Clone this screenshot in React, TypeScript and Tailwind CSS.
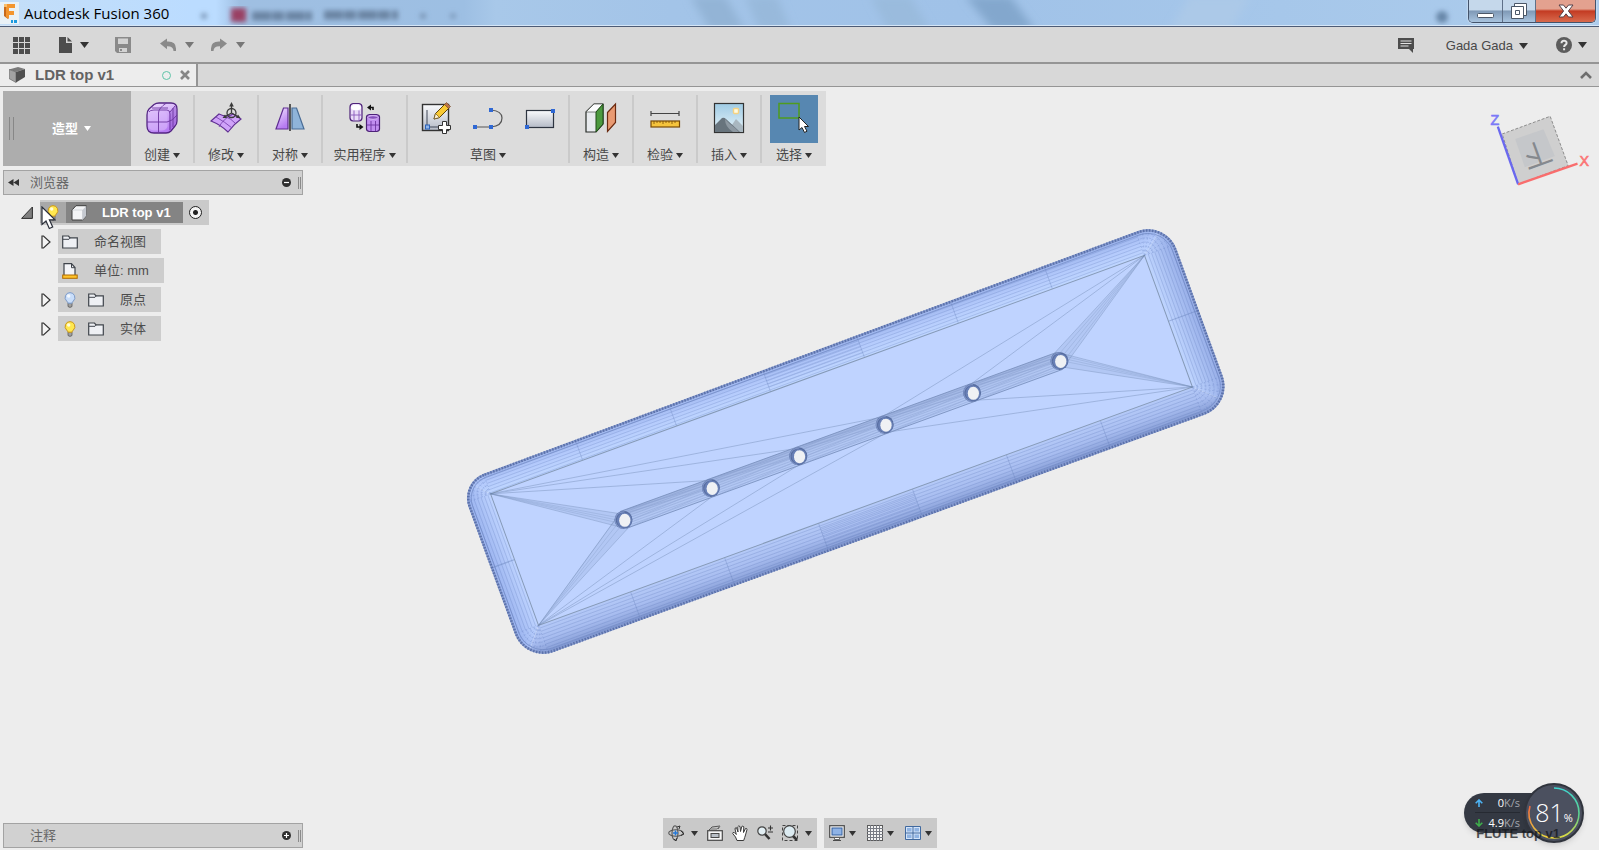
import type { ReactNode } from 'react';
import clsx from 'clsx';

const UI_FONT = "font-['Liberation_Sans','Noto_Sans_CJK_SC',sans-serif]";
const TITLE_FONT = "font-['Open_Sans','Noto_Sans_CJK_SC',sans-serif]";

function Caret({ big, className }: { big?: boolean; className?: string }) {
  return (
    <svg viewBox="0 0 9 6" preserveAspectRatio="none" className={clsx(big ? 'w-[9px] h-[6px]' : 'w-[7px] h-[5px]', 'shrink-0 fill-current', className)}>
      <path d="M0 0h9L4.500 6z" />
    </svg>
  );
}

function Icon({ size = 16, children, className }: { size?: 16 | 32; children: ReactNode; className?: string }) {
  return (
    <svg viewBox={`0 0 ${size} ${size}`} className={clsx(size === 32 ? 'size-8' : 'size-4', 'shrink-0', className)} fill="none">
      {children}
    </svg>
  );
}

/* ---------- title bar ---------- */

function TitleBar() {
  return (
    <header className="relative flex h-[27px] shrink-0 items-start justify-between overflow-hidden border-b border-[#4d5b75] bg-[#a5c5e8]">
      <svg className="absolute inset-0 h-full w-full" viewBox="0 0 1599 26" preserveAspectRatio="none">
        <defs>
          <linearGradient id="sky" x1="0" x2="1">
            <stop offset="0" stopColor="#c4def8" />
            <stop offset=".12" stopColor="#bbdcff" />
            <stop offset=".135" stopColor="#bbdcff" />
            <stop offset=".15" stopColor="#9fbfe2" />
            <stop offset=".29" stopColor="#9dbfe3" />
            <stop offset=".31" stopColor="#a8c8e9" />
            <stop offset=".42" stopColor="#a3c4e8" />
            <stop offset=".6" stopColor="#a0c2e8" />
            <stop offset="1" stopColor="#acccec" />
          </linearGradient>
          <filter id="soft"><feGaussianBlur stdDeviation="4" /></filter>
          <filter id="ghost"><feGaussianBlur stdDeviation="2.500" /></filter>
        </defs>
        <rect width="1599" height="26" fill="url(#sky)" />
        <g filter="url(#soft)">
          <path d="M690-4h35l20 34h-35z" fill="#93b4d6" />
          <path d="M745-4h32l14 34h-32z" fill="#98b9db" />
          <path d="M870-4h40l20 34h-42z" fill="#9abbdd" />
          <path d="M965-4h45l25 34h-42z" fill="#83a7cd" />
          <path d="M1190-4h60l-20 34h-60z" fill="#acc9e8" />
        </g>
        <g filter="url(#ghost)">
          <rect x="231" y="8" width="15" height="14" fill="#9a3f63" />
          <path d="M252 16h60M324 15h74" stroke="#6a84a3" strokeWidth="9" strokeDasharray="19 1 12 2" />
          <circle cx="204" cy="16" r="3" fill="#7893b3" />
          <circle cx="423" cy="16" r="3" fill="#7893b3" />
          <circle cx="453" cy="16" r="3" fill="#7f9bbd" />
          <circle cx="1442" cy="17" r="6" fill="#6887a8" />
        </g>
        <path d="M0 25.500h1599" stroke="#d5e6f7" />
      </svg>
      <div className="relative flex h-[26px] items-center gap-[5px]">
        <svg viewBox="0 0 19 22" className="h-[22px] w-[19px]">
          <rect width="19" height="22" fill="#e9f1f6" />
          <path d="M4 2h4v15l-4-3z" fill="#c76a1c" />
          <path d="M6 2h9v4H9v3h5v4H9v4l-3-2z" fill="#f3952e" />
          <path d="M4 2h3v3H4z" fill="#f9bd6a" />
          <path d="M11 18h2v3h-2zM14 18h3v3h-3z" fill="#1d9be0" />
        </svg>
        <h1 className={clsx(TITLE_FONT, 'text-[15px] leading-5 text-black')}>Autodesk Fusion 360</h1>
      </div>
      <div className="relative mr-[3px] flex h-[23px] overflow-hidden rounded-b-[5px] border border-t-0 border-[#43536b] shadow-[0_0_2px_#ffffff]">
        <button aria-label="最小化" className="flex w-[34px] items-end justify-center border-r border-[#5f7088] bg-gradient-to-b from-[#c5d8eb] from-45% via-[#7f99b6] via-50% to-[#a9c4df] pb-1">
          <svg viewBox="0 0 17 5" className="h-[5px] w-[17px]"><rect x=".5" y=".5" width="16" height="4" rx="1" fill="#fff" stroke="#4b5767" /></svg>
        </button>
        <button aria-label="还原" className="flex w-[33px] items-center justify-center border-r border-[#5f7088] bg-gradient-to-b from-[#c5d8eb] from-45% via-[#7f99b6] via-50% to-[#a9c4df]">
          <svg viewBox="0 0 18 18" className="size-[18px]" fill="#fff" stroke="#4b5767">
            <path d="M4.500 1.500h12v12h-12z" />
            <path fillRule="evenodd" d="M1.500 4.500h12v12h-12zM5.500 8.500v4h4v-4z" />
          </svg>
        </button>
        <button aria-label="关闭" className="flex w-[59px] items-center justify-center bg-gradient-to-b from-[#e3a18f] from-40% via-[#c33a22] via-50% to-[#d8694c]">
          <svg viewBox="0 0 16 14" className="h-[14px] w-4">
            <path d="M1 1h4.500L8 4.200 10.500 1H15l-4.600 6 4.600 6h-4.500L8 9.800 5.500 13H1l4.600-6z" fill="#fff" stroke="#544148" />
          </svg>
        </button>
      </div>
    </header>
  );
}

/* ---------- application bar ---------- */

function AppBar() {
  return (
    <div className="flex h-[37px] shrink-0 items-center justify-between border-b-2 border-[#959595] bg-[#d8d8d8] pt-px pr-3 pl-[13px]">
      <div className="flex items-center text-[#4a4a4a]">
        <button aria-label="数据面板">
          <svg viewBox="0 0 17 17" className="size-[17px]" fill="#4d4d4d">
            {[0, 6, 12].map(y => [0, 6, 12].map(x => <rect key={`${x}-${y}`} x={x} y={y} width="5" height="5" />))}
          </svg>
        </button>
        <button aria-label="文件" className="ml-7 flex items-center gap-1.5">
          <Icon>
            <path d="M1 0h7v6h6v10H1z" fill="#4d4d4d" />
            <path d="M9.500 0 14 4.500H9.500z" fill="#4d4d4d" />
          </Icon>
          <Caret big className="text-[#333]" />
        </button>
        <button aria-label="保存" className="ml-[26px]">
          <Icon>
            <path d="M0 0h16v16H2l-2-2z" fill="#8a8a8a" />
            <path d="M3 1.500h10V7H3zM4 11h8v4H4z" fill="#d3d3d3" />
            <path d="M5 12h2v2H5z" fill="#8a8a8a" />
          </Icon>
        </button>
        <button aria-label="撤销" className="ml-[29px] flex items-center gap-[9px]">
          <Icon><path d="M0 6.500 7 1.500v3q9-.5 9 7v2.500h-2.500q0-5-6.500-4.800v3z" fill="#8a8a8a" /></Icon>
          <Caret big className="text-[#777]" />
        </button>
        <button aria-label="恢复" className="ml-[17px] flex items-center gap-[9px]">
          <Icon><path d="M16 6.500 9 1.500v3q-9-.5-9 7v2.500h2.500q0-5 6.500-4.800v3z" fill="#8a8a8a" /></Icon>
          <Caret big className="text-[#777]" />
        </button>
      </div>
      <div className="flex items-center text-[#3a3a3a]">
        <button aria-label="通知">
          <Icon>
            <path d="M0 1h16v11h-1v4l-4-4H0z" fill="#4d4d4d" />
            <path d="M2.500 4h11M2.500 6.500h11M2.500 9h8" stroke="#e2e2e2" />
          </Icon>
        </button>
        <button className="ml-8 flex items-center gap-1.5 pt-0.5 text-[13px] leading-4 text-[#484848]">
          Gada Gada
          <Caret big className="text-[#333]" />
        </button>
        <button aria-label="帮助" className="ml-7 flex items-center gap-1.5">
          <Icon>
            <circle cx="8" cy="8" r="8" fill="#5c5c5c" />
            <path d="M5.500 6.200C5.500 3 10.600 3 10.600 6c0 2-2.500 1.800-2.500 4M8.100 11.200v2" stroke="#e6e6e6" strokeWidth="2" />
          </Icon>
          <Caret big className="text-[#333]" />
        </button>
      </div>
    </div>
  );
}

function TabBar() {
  return (
    <div className="flex h-[23px] shrink-0 items-stretch justify-between border-b border-[#959595] bg-[#d8d8d8] pr-[7px]">
      <div className="flex items-center border-r-2 border-[#959595] bg-[#ededed] pr-1.5 pl-[9px]">
        <Icon>
          <path d="M0 2.500 9 0l7 2-9 3z" fill="#7a7a7a" />
          <path d="M0 2.500l7 2.500v10.500l-7-4z" fill="#a2a2a2" stroke="#696969" strokeWidth=".7" />
          <path d="M7 5l9-3v8l-9 5.500z" fill="#505050" />
        </Icon>
        <span className="ml-2.5 w-[127px] text-[15px] leading-5 font-bold text-[#636363]">LDR top v1</span>
        <span className="size-[9px] rounded-full border border-[#5fc4a8]" />
        <button aria-label="关闭文档" className="ml-[9px]">
          <svg viewBox="0 0 10 10" className="size-2.5"><path d="M1 1l8 8M9 1 1 9" stroke="#868686" strokeWidth="2.600" /></svg>
        </button>
      </div>
      <button aria-label="折叠">
        <svg viewBox="0 0 12 8" className="h-2 w-3" fill="none"><path d="M1 7l5-5 5 5" stroke="#6f6f6f" strokeWidth="2.600" /></svg>
      </button>
    </div>
  );
}

/* ---------- ribbon ---------- */

function CreateIcon() {
  return (
    <Icon size={32}>
      <defs>
        <linearGradient id="violet" x1="0" y1="0" x2=".4" y2="1">
          <stop offset="0" stopColor="#f1e3ff" />
          <stop offset="1" stopColor="#b67bf2" />
        </linearGradient>
      </defs>
      <path d="M8 2.500Q10 1 13 1h12q6 0 6 6v12q0 3-2 5l-4 5q-2 2-5 2H8q-7 0-7-7V13q0-4 2-6z" fill="url(#violet)" stroke="#532583" strokeWidth="1.300" />
      <path d="M23 10l7-6v17l-7 8z" fill="#8a4bc9" opacity=".4" />
      <rect x="2.500" y="9.500" width="19" height="19" rx="5" fill="#d9b8fb" opacity=".6" />
      <path d="M12.500 30V11q0-5 8-10M1 20h20q6-1 10-7M6 6h16M3 10q1-2 5-2h13q3 0 3 4v16M24 10l5-6M27 6v19" stroke="#6c359f" strokeWidth=".9" />
    </Icon>
  );
}

function ModifyIcon() {
  return (
    <Icon size={32}>
      <path d="M1 19 9 12q8 4 14 0l8 5q-7 5-13 13-7-7-17-11z" fill="#cfa3f9" stroke="#5e2d91" strokeWidth="1.100" />
      <path d="M6 15q9 5 16 11M9 25q4-8 14-13M14 14q8 3 11 7" stroke="#7a44b0" strokeWidth=".9" />
      <circle cx="21.500" cy="11" r="4.500" stroke="#3b3b3b" strokeWidth="1.300" />
      <path d="M21.500 11V3M21.500 11l-7 4M21.500 11l7 4" stroke="#3b3b3b" strokeWidth="1.300" />
      <path d="M21.500 0l2.300 4.500h-4.600zM12.500 16l2.500-3.500 2 3.500zM30.500 16l-2.500-3.500-2 3.500z" fill="#3b3b3b" />
    </Icon>
  );
}

function SymmetryIcon() {
  return (
    <Icon size={32}>
      <path d="M9.500 6H14v21H2z" fill="url(#violet)" stroke="#5e2d91" strokeWidth="1.200" />
      <path d="M18 6h4.500L30 27H18z" fill="#8fb4da" stroke="#4a6d96" strokeWidth="1.200" />
      <path d="M16 2v27" stroke="#1d1d1d" strokeWidth="1.400" />
    </Icon>
  );
}

function UtilitiesIcon() {
  return (
    <Icon size={32}>
      <path d="M1 5q0-3 3-3.500h6q3 .5 3 3.500v11q0 2.500-3 3H4q-3-.5-3-3z" fill="#eadcf8" stroke="#4d2278" strokeWidth="1.200" />
      <ellipse cx="7" cy="5.500" rx="5" ry="2.800" fill="#fff" />
      <path d="M5 8.500V19M10 8.500V19M2 13h11" stroke="#8b5abb" strokeWidth=".9" />
      <path d="M17.500 15q0-2 3-2.500h7q3 .5 3 2.500v12q0 2-3 2.500h-7q-3-.5-3-2.500z" fill="#c08ef0" stroke="#4d2278" strokeWidth="1.200" />
      <ellipse cx="24" cy="15.500" rx="5" ry="1.800" fill="#8750bd" stroke="#e3cdfa" strokeWidth=".8" />
      <path d="M22 19v10M26.500 19v10M18 23h12" stroke="#6d36a1" strokeWidth=".9" />
      <path d="M24 8V5.500h-4M8 22v3h4" stroke="#111" strokeWidth="1.600" />
      <path d="M22 2.500v6l-4-3zM10.500 22v6l4-3z" fill="#111" />
    </Icon>
  );
}

function SketchIcon() {
  return (
    <Icon size={32}>
      <defs>
        <linearGradient id="steel" x1="0" y1="0" x2="0" y2="1">
          <stop offset="0" stopColor="#fafbfd" />
          <stop offset="1" stopColor="#b4bac6" />
        </linearGradient>
      </defs>
      <rect x="2.500" y="2.500" width="26" height="26" fill="url(#steel)" stroke="#333" strokeWidth="1.400" />
      <path d="M7 8v17h15" stroke="#3e4656" />
      <rect x="5.500" y="23" width="4" height="4" fill="#8fb5ea" stroke="#2b62b8" />
      <path d="M14 17l1.500-5.500L25 2l4 4-9.500 9.500z" fill="#f8c934" stroke="#5b4209" />
      <path d="M14 17l1.500-5.500 4 4z" fill="#fff2cf" stroke="#5b4209" strokeWidth=".6" />
      <path d="M24.500 2.500l2-2 4 4-2 2z" fill="#b9744a" stroke="#6a3e1d" strokeWidth=".6" />
      <path d="M22.500 19.500h4v4h4v4h-4v4h-4v-4h-4v-4h4z" fill="#fff" stroke="#333" />
    </Icon>
  );
}

function SplineIcon() {
  return (
    <Icon size={32}>
      <path d="M3 25h16q11-1 11-9 0-7-11-8" stroke="#555" strokeWidth="1.200" />
      <path d="M1 23h4v4H1zM17 23h4v4h-4zM17 6h4v4h-4z" fill="#2f68d4" />
    </Icon>
  );
}

function RectangleIcon() {
  return (
    <Icon size={32}>
      <rect x="2.500" y="8.500" width="27" height="17" fill="url(#steel)" stroke="#2d3440" strokeWidth="1.200" />
      <path d="M1 23h4v4H1zM27 7h4v4h-4z" fill="#2f68d4" />
    </Icon>
  );
}

function ConstructIcon() {
  return (
    <Icon size={32}>
      <path d="M1 10l8-8h9v20l-7 8H1z" fill="#e8ebee" stroke="#262b26" strokeWidth="1.200" />
      <path d="M1 10l8-8h9l-7 8z" fill="#fbfcfd" stroke="#4c524c" strokeWidth=".7" />
      <path d="M11 10l7-8v20l-7 8z" fill="#4c9a3f" stroke="#1f4b19" />
      <path d="M22.500 10.500 30.500 2v18.500l-8 9z" fill="#e99a72" stroke="#6b2a10" strokeWidth="1.200" />
    </Icon>
  );
}

function InspectIcon() {
  return (
    <Icon size={32}>
      <path d="M2 11.500h28M2 9v5M30 9v5" stroke="#444" strokeWidth="1.200" />
      <rect x="2" y="19" width="28.500" height="6" fill="#f6c43c" stroke="#7a4b05" strokeWidth="1.200" />
      <path d="M5 19v3M8 19v2M11 19v2M14 19v3M17 19v2M20 19v2M23 19v3M26 19v2" stroke="#7a4b05" strokeWidth=".8" />
    </Icon>
  );
}

function InsertIcon() {
  return (
    <Icon size={32}>
      <defs>
        <linearGradient id="photo" x1="0" y1="0" x2="0" y2="1">
          <stop offset="0" stopColor="#9fcbe4" />
          <stop offset="1" stopColor="#e7f4fa" />
        </linearGradient>
      </defs>
      <rect x="1.500" y="1.500" width="29" height="29" fill="url(#photo)" stroke="#333" strokeWidth="1.200" />
      <path d="M14 30l9-13 7 7v6z" fill="#a9b7c0" />
      <path d="M2 23l7-7q2-1 4 1l14 13H2z" fill="#68747d" />
      <path d="M12 17l5 5 5 4 4 4h-6q-8-5-8-13z" fill="#8d98a1" />
      <rect x="20.500" y="6.500" width="5" height="5" rx="1" fill="#fffbe0" stroke="#f5d283" strokeWidth="1.400" />
    </Icon>
  );
}

function SelectIcon() {
  return (
    <svg viewBox="0 0 48 48" className="size-12" fill="none">
      <rect x="9" y="8.500" width="20" height="14.500" stroke="#4f9c1e" strokeWidth="1.500" />
      <path d="M29 22v13l3-2.500 2.500 5 2.500-1.300-2.500-4.700h4z" fill="#fff" stroke="#222" />
    </svg>
  );
}

interface RibbonGroup {
  label: string;
  width: string;
  tools: { name: string; icon: ReactNode }[];
}

const groups: RibbonGroup[] = [
  { label: '创建', width: 'w-16', tools: [{ name: '创建形状', icon: <CreateIcon /> }] },
  { label: '修改', width: 'w-16', tools: [{ name: '编辑形状', icon: <ModifyIcon /> }] },
  { label: '对称', width: 'w-16', tools: [{ name: '镜像', icon: <SymmetryIcon /> }] },
  { label: '实用程序', width: 'w-[85px]', tools: [{ name: '转换', icon: <UtilitiesIcon /> }] },
  {
    label: '草图',
    width: 'w-[162px]',
    tools: [
      { name: '创建草图', icon: <SketchIcon /> },
      { name: '样条曲线', icon: <SplineIcon /> },
      { name: '矩形', icon: <RectangleIcon /> },
    ],
  },
  { label: '构造', width: 'w-16', tools: [{ name: '偏移平面', icon: <ConstructIcon /> }] },
  { label: '检验', width: 'w-16', tools: [{ name: '测量', icon: <InspectIcon /> }] },
  { label: '插入', width: 'w-16', tools: [{ name: '插入图像', icon: <InsertIcon /> }] },
];

function GroupLabel({ children }: { children: ReactNode }) {
  return (
    <button className="flex items-center gap-[3px] text-[13px] leading-4 whitespace-nowrap text-[#484848]">
      {children}
      <Caret className="text-[#333]" />
    </button>
  );
}

function Ribbon() {
  return (
    <nav className="flex h-[75px] w-max bg-[#dcdcdc]">
      <button className="flex w-32 items-center bg-[#adadad] pl-1.5 text-[13px] font-bold text-white">
        <span className="h-[23px] w-[5px] border-x border-[#878787]" />
        <span className="ml-[38px]">造型</span>
        <Caret className="ml-1.5" />
      </button>
      {groups.map(group => (
        <div key={group.label} className={clsx(group.width, 'flex pt-1 pb-[3px]')}>
          <div className="flex flex-1 flex-col items-center justify-between border-r-2 border-[#cacaca]">
            <div className="flex gap-5 pt-[7px]">
              {group.tools.map(tool => (
                <button key={tool.name} aria-label={tool.name}>{tool.icon}</button>
              ))}
            </div>
            <GroupLabel>{group.label}</GroupLabel>
          </div>
        </div>
      ))}
      <div className="flex w-16 flex-col items-center justify-between pt-1 pb-[3px]">
        <button aria-label="选择工具" className="bg-[#5787b1]"><SelectIcon /></button>
        <GroupLabel>选择</GroupLabel>
      </div>
    </nav>
  );
}

/* ---------- browser ---------- */

function PanelBar({ title, open }: { title: string; open?: boolean }) {
  return (
    <div className="flex h-[25px] w-[300px] items-center border border-[#a3a3a3] bg-[#d1d1d1] pl-1 text-[13px] text-[#666]">
      <span className="w-[22px]">
        {open && (
          <button aria-label="折叠面板" className="block">
            <svg viewBox="0 0 11 7" className="h-[7px] w-[11px]" fill="#333"><path d="M5.500 0v7L0 3.500zM11 0v7L5.500 3.500z" /></svg>
          </button>
        )}
      </span>
      <span className="flex-1 leading-4">{title}</span>
      <button aria-label={open ? '全部折叠' : '添加注释'}>
        <svg viewBox="0 0 9 9" className="size-[9px]">
          <circle cx="4.500" cy="4.500" r="4.500" fill="#2f2f2f" />
          <path d={open ? 'M2 4.500h5' : 'M2 4.500h5M4.500 2v5'} stroke="#fff" strokeWidth="1.200" />
        </svg>
      </button>
      <span className="mr-px ml-[7px] h-3 w-[3px] border-x border-[#8b8b8b]" />
    </div>
  );
}

function Bulb({ on }: { on?: boolean }) {
  return (
    <Icon>
      <path d="M6 11h4v3.500q-2 1.800-4 0z" fill="#a0a0a0" stroke="#5a5a5a" strokeWidth=".8" />
      <path d="M8 .6a4.900 4.900 0 0 1 3.300 8.500Q10.200 10 10 11.200H6Q5.800 10 4.700 9.100A4.900 4.900 0 0 1 8 .6z" fill={on ? '#ffe84f' : '#c9defa'} stroke={on ? '#c9951f' : '#7d9ac6'} />
      <circle cx="6.700" cy="4" r="1.700" fill="#fff" opacity=".8" />
    </Icon>
  );
}

function Folder() {
  return (
    <Icon>
      <path d="M.7 14V2h5.800l1.500 1.800h7.300V14z" fill="#eef0f4" stroke="#3f444b" strokeWidth="1.200" />
      <path d="M1 5.300h6L8.300 3.800" stroke="#3f444b" />
    </Icon>
  );
}

function UnitsIcon() {
  return (
    <Icon>
      <path d="M2 .7h7.500L13 4.500V13H2z" fill="#f4f5f8" stroke="#3f444b" strokeWidth="1.200" />
      <path d="M9.500.7v4H13" stroke="#3f444b" />
      <rect x=".7" y="12" width="14.500" height="3.300" fill="#ffc42b" stroke="#b06b00" />
    </Icon>
  );
}

function Expander() {
  return (
    <svg viewBox="0 0 10 14" className="h-[14px] w-2.5 shrink-0"><path d="M1 1v12h1.500L9 7 2.500 1z" fill="#f4f4f4" stroke="#333" strokeWidth="1.200" /></svg>
  );
}

function Cursor() {
  return (
    <svg viewBox="0 0 15 24" className="absolute top-1.5 left-[38px] h-6 w-[15px]">
      <path d="M1 1v17.500l4-3.500 3.300 7.500 3.400-1.500-3.300-7.200h5.600z" fill="#fff" stroke="#2a2f3a" strokeWidth="1.200" />
    </svg>
  );
}

interface NodeRow {
  label: string;
  expandable: boolean;
  icons: ReactNode;
}

const rows: NodeRow[] = [
  { label: '命名视图', expandable: true, icons: <Folder /> },
  { label: '单位: mm', expandable: false, icons: <UnitsIcon /> },
  { label: '原点', expandable: true, icons: <><Bulb /><Folder /></> },
  { label: '实体', expandable: true, icons: <><Bulb on /><Folder /></> },
];

function BrowserTree() {
  return (
    <ul className="mt-[5px] flex flex-col gap-1 text-[13px] text-[#4d4d4d]">
      <li className="relative flex h-[25px] items-center pl-[18px]">
        <button aria-label="折叠">
          <svg viewBox="0 0 12 12" className="size-3"><path d="M11.400 0v11.400H.6z" fill="#808080" stroke="#2d2d2d" /></svg>
        </button>
        <div className="ml-[7px] flex h-full items-center bg-[#cacaca] pr-[7px]">
          <span className="flex h-[21px] w-[26px] items-center justify-center bg-[#a8a8a8]"><Bulb on /></span>
          <button className="flex h-[21px] items-center bg-[#848484] pr-3 pl-[5px] text-white">
            <Icon>
              <path d="M1 5l4-4.300h10.300v10L11.500 15H1z" fill="#f3f4f6" stroke="#3e3e3e" />
              <path d="M11.500 5l3.800-4v9.700L11.500 15z" fill="#c5c9d0" />
              <path d="M1 5h10.500v10" stroke="#bfc3c9" strokeWidth=".6" />
            </Icon>
            <span className="ml-[15px] leading-4 font-bold">LDR top v1</span>
          </button>
          <input type="radio" name="active" defaultChecked aria-label="激活 LDR top v1" className="ml-1.5 size-[13px] appearance-none rounded-full border border-[#222] bg-[radial-gradient(circle,#222_0_2px,#f4f4f4_3px)]" />
        </div>
        <Cursor />
      </li>
      {rows.map(row => (
        <li key={row.label} className="flex h-[25px] items-center pl-[38px]">
          <span className="w-[17px]">
            {row.expandable && <button aria-label={`展开${row.label}`} className="block"><Expander /></button>}
          </span>
          <button className="flex h-full items-center bg-[#cdcdcd] pr-[15px] pl-1">
            <span className="flex gap-2.5">{row.icons}</span>
            <span className="ml-4 leading-4">{row.label}</span>
          </button>
        </li>
      ))}
    </ul>
  );
}

/* ---------- model ---------- */

const IN_X = 348;
const IN_Y = 70;
const HOLES = [-232, -139, -46, 46, 139, 232];
const SEAMS = [-250, -150, -50, 50, 150, 250];

// the far left edge is a little shallower than the right one
function outline(inset = 0) {
  const l = -372 + inset;
  const r = 379 - inset;
  const tl = -90 + inset;
  const tr = -94 + inset;
  const b = 99 - inset;
  const c = 29 - inset;
  const s = 25 - inset;
  return `M${l + s} ${tl}L${r - c} ${tr}A${c} ${c} 0 0 1 ${r} ${tr + c}V${b - c}A${c} ${c} 0 0 1 ${r - c} ${b}H${l + c}A${c} ${c} 0 0 1 ${l} ${b - c}V${tl + s}A${s} ${s} 0 0 1 ${l + s} ${tl}z`;
}

function range(from: number, to: number, n: number) {
  return Array.from({ length: n }, (_, i) => from + ((to - from) * i) / (n - 1));
}

function CornerMesh({ x, y, sx, sy }: { x: number; y: number; sx: number; sy: number }) {
  return (
    <g stroke="#5b76ba" strokeWidth=".6" opacity=".4">
      {range(0, 90, 7).map(a => {
        const t = (a * Math.PI) / 180;
        return <line key={a} x1={x} y1={y} x2={x + sx * 42 * Math.cos(t)} y2={y + sy * 42 * Math.sin(t)} strokeDasharray="2 2" />;
      })}
      {[5, 9, 13, 17, 21, 25, 28].map(r => (
        <path key={r} strokeDasharray="2 1" d={`M${x + sx * r} ${y}Q${x + sx * r} ${y + sy * r} ${x} ${y + sy * r}`} />
      ))}
    </g>
  );
}

function Model() {
  return (
    <svg viewBox="0 87 1599 763" className="absolute inset-0 h-full w-full" fill="none">
      <defs>
        <linearGradient id="bevelTop" x1="0" y1="1" x2="0" y2="0">
          <stop offset="0" stopColor="#bfd6ff" />
          <stop offset=".5" stopColor="#b4cafc" />
          <stop offset="1" stopColor="#96aee8" />
        </linearGradient>
        <linearGradient id="bevelBottom" x1="0" y1="0" x2="0" y2="1">
          <stop offset="0" stopColor="#b5caf8" />
          <stop offset=".5" stopColor="#a8bdf0" />
          <stop offset="1" stopColor="#8299d2" />
        </linearGradient>
        <linearGradient id="bevelLeft" x1="1" y1="0" x2="0" y2="0">
          <stop offset="0" stopColor="#bfd4ff" />
          <stop offset="1" stopColor="#98b1ee" />
        </linearGradient>
        <linearGradient id="bevelRight" x1="0" y1="0" x2="1" y2="0">
          <stop offset="0" stopColor="#bfd5ff" />
          <stop offset="1" stopColor="#94abe6" />
        </linearGradient>
        <linearGradient id="channel" x1="0" y1="0" x2="0" y2="1">
          <stop offset="0" stopColor="#9db2df" />
          <stop offset=".5" stopColor="#afc4f0" />
          <stop offset="1" stopColor="#b4c9f5" />
        </linearGradient>
        <clipPath id="body"><path d={outline()} /></clipPath>
      </defs>
      <g transform="translate(841.5 440.4) rotate(-20.03)">
        <g clipPath="url(#body)">
          <path d={`M-373-95H380L${IN_X} ${-IN_Y}H${-IN_X}z`} fill="url(#bevelTop)" />
          <path d={`M-373 100H380L${IN_X} ${IN_Y}H${-IN_X}z`} fill="url(#bevelBottom)" />
          <path d={`M-373-95V100L${-IN_X} ${IN_Y}V${-IN_Y}z`} fill="url(#bevelLeft)" />
          <path d={`M380-95V100L${IN_X} ${IN_Y}V${-IN_Y}z`} fill="url(#bevelRight)" />
          <g stroke="#5570b2" strokeWidth=".6" opacity=".35">
            {range(-73, -93, 7).map(y => <line key={y} x1={-IN_X} x2={IN_X} y1={y + 2} y2={y} />)}
            {range(73, 97, 8).map(y => <line key={y} x1={-IN_X} x2={IN_X} y1={y} y2={y} />)}
            {range(-351, -369, 6).map(x => <line key={x} x1={x} x2={x} y1={-IN_Y} y2={IN_Y} />)}
            {range(352, 376, 8).map(x => <line key={x} x1={x} x2={x} y1={-IN_Y} y2={IN_Y} />)}
            {range(-75, -91, 6).map(y => <line key={y} x1="-50" x2="50" y1={y} y2={y} />)}
            {range(75, 94, 7).map(y => <line key={y} x1="-50" x2="50" y1={y} y2={y} />)}
          </g>
          <g stroke="#627cb4" strokeWidth=".7" opacity=".4">
            {SEAMS.map(x => <path key={x} d={`M${x}-95V${-IN_Y}M${x} ${IN_Y}V100`} />)}
            <path d={`M-373 0H${-IN_X}M${IN_X} 0H380`} strokeWidth="1.200" />
          </g>
          <CornerMesh x={-IN_X} y={-IN_Y} sx={-1} sy={-1} />
          <CornerMesh x={IN_X} y={-IN_Y} sx={1} sy={-1} />
          <CornerMesh x={-IN_X} y={IN_Y} sx={-1} sy={1} />
          <CornerMesh x={IN_X} y={IN_Y} sx={1} sy={1} />
        </g>
        <path d={outline()} stroke="#879bce" strokeWidth="2.500" />
        <path d={outline()} stroke="#5a71ab" strokeWidth="2.500" strokeDasharray="1.500 1.500" />
        <path d={outline(3)} stroke="#7088c2" strokeWidth=".8" opacity=".8" />

        <rect x={-IN_X} y={-IN_Y} width={IN_X * 2} height={IN_Y * 2} fill="#bfd3ff" stroke="#8499b8" />

        {/* triangulation of the flat face */}
        <g stroke="#6b84ac" strokeWidth=".7" opacity=".5">
          {HOLES.slice(1, 4).map(x => <path key={x} d={`M${-IN_X} ${-IN_Y}L${x} -8M${-IN_X} ${IN_Y}L${x} 8`} />)}
          {HOLES.slice(3, 5).map(x => <path key={x} d={`M${IN_X} ${-IN_Y}L${x} -8M${IN_X} ${IN_Y}L${x} 8`} />)}
        </g>
        <g fill="#8ba3d2" fillOpacity=".25" stroke="#6b84ac" strokeWidth=".6" strokeOpacity=".5">
          <path d={`M${-IN_X} ${-IN_Y}L-235-8L-240 4z`} />
          <path d={`M${-IN_X} ${IN_Y}L-240-3L-228 8z`} />
          <path d={`M${IN_X} ${-IN_Y}L228-8L240 3z`} />
          <path d={`M${IN_X} ${IN_Y}L240-4L235 8z`} />
        </g>
        <g stroke="#6b84ac" strokeWidth=".5" opacity=".4">
          {[-5, -2, 1].map(y => (
            <path key={y} d={`M${-IN_X} ${-IN_Y}L-238 ${y}M${-IN_X} ${IN_Y}L${-236 + y} ${y + 3}M${IN_X} ${-IN_Y}L${236 + y} ${y}M${IN_X} ${IN_Y}L238 ${y + 2}`} />
          ))}
        </g>

        {/* channel through the holes */}
        <rect x="-232" y="-9" width="464" height="18" fill="url(#channel)" />
        <g stroke="#5a72a8" strokeWidth=".6" opacity=".3">
          {range(-7, 7, 7).map(y => <line key={y} x1="-232" x2="232" y1={y} y2={y} />)}
          {HOLES.slice(0, 5).map(x => <path key={x} d={`M${x}-9L${x + 93}-4M${x}-6L${x + 93} 0M${x} 9L${x + 93} 4M${x} 3L${x + 93}-2`} />)}
        </g>
        <path d="M-232-9H232M-232 9H232" stroke="#7a90bd" strokeWidth=".8" />

        {HOLES.map(x => (
          <g key={x} transform={`translate(${x} 0) rotate(20.03)`}>
            <circle r="9" fill="#566c9f" />
            <path d="M1-8A8 8 0 0 0-1 8.500" stroke="#7d93c6" strokeWidth="1.200" />
            <circle cx=".8" cy=".3" r="7.500" fill="#6980b6" />
            <path d="M-1-5.500Q-5.500 0-2 6" stroke="#dbe6fb" strokeDasharray="2 1" />
            <ellipse cx="1.300" cy=".5" rx="5.600" ry="6.500" fill="#eff1f4" />
          </g>
        ))}
      </g>
    </svg>
  );
}

function ViewCube() {
  return (
    <svg viewBox="320 330 320 240" className="absolute top-[23px] right-[5px] h-20 w-[107px]" fill="none">
      <path d="M365 402 509 349l54 148-150 56z" fill="#cfcfcf" stroke="#8d8d8d" strokeWidth="3" strokeDasharray="9 5" />
      <path d="M404 417 489 388l34 80-90 34z" fill="#c5c7ca" />
      <text x="468" y="458" transform="rotate(160 468 458)" dy="26" textAnchor="middle" fontSize="86" fill="#85898e" className={UI_FONT}>下</text>
      <path d="M352 380 413 553" stroke="#6a68ef" strokeWidth="7" />
      <path d="M413 553 591 491" stroke="#f96d6d" strokeWidth="7" />
      <text x="330" y="374" fontSize="43" fill="#7b79f7" stroke="#7b79f7" strokeWidth="2" className={UI_FONT}>Z</text>
      <text x="597" y="498" fontSize="43" fill="#fb7676" stroke="#fb7676" strokeWidth="2" className={UI_FONT}>X</text>
    </svg>
  );
}

/* ---------- bottom ---------- */

function OrbitIcon() {
  return (
    <Icon>
      <ellipse cx="8" cy="8" rx="7.300" ry="3.200" stroke="#555" strokeWidth="1.100" />
      <ellipse cx="7" cy="8" rx="3" ry="7.300" stroke="#555" strokeWidth="1.100" />
      <path d="M7.500 5.500v5M5 8h5" stroke="#2478d8" strokeWidth="1.500" />
      <path d="M9 2l3-1-1 3M13 6l3 3-3 1.500M9 13l-1 3-2-2" stroke="#333" />
    </Icon>
  );
}

function LookAtIcon() {
  return (
    <Icon>
      <path d="M2 5l3-3 8-1-2 3" stroke="#555" />
      <path d="M3 4h7l3-3" stroke="#777" />
      <rect x=".7" y="5.700" width="14.600" height="9.600" fill="#f7f7f7" stroke="#484848" strokeWidth="1.200" />
      <rect x="4" y="8.500" width="8" height="4" fill="#b9bfc6" stroke="#484848" />
    </Icon>
  );
}

function HandIcon() {
  return (
    <Icon>
      <path d="M5 15.500 3.500 12 .7 8.500q0-1.500 1.600-1l2 2L3 4q0-1.500 1.500-1.300L6 7 5.800 1.800Q6.500.2 8 1.500l.5 5L9.800 1.500q1.200-1 2 .3L11.500 7.500l2-4q1.500-.5 1.500 1L13.500 10l-.8 2.500-1 3z" fill="#fff" stroke="#3a3a3a" />
    </Icon>
  );
}

function ZoomIcon() {
  return (
    <Icon>
      <path d="M7.500 8.500 12.500 14" stroke="#333" strokeWidth="2.600" />
      <circle cx="5" cy="6" r="4.200" fill="#e3eff4" stroke="#444" strokeWidth="1.200" />
      <path d="M13.500.5v5M11 3h5M11 7h5" stroke="#333" strokeWidth="1.100" />
    </Icon>
  );
}

function ZoomWindowIcon() {
  return (
    <Icon>
      <path d="M.5.500h15v15H.5z" stroke="#444" strokeDasharray="3 2" />
      <path d="M10.500 10.500 15 15" stroke="#333" strokeWidth="2.600" />
      <circle cx="7.500" cy="6.500" r="5.800" fill="#dcebf1" stroke="#444" strokeWidth="1.200" />
    </Icon>
  );
}

function DisplayIcon() {
  return (
    <Icon>
      <rect x=".7" y=".7" width="14.600" height="11.600" fill="#f5f5f5" stroke="#4a4a4a" strokeWidth="1.200" />
      <rect x="3" y="3" width="10" height="7" fill="#8fb3e6" stroke="#35609f" />
      <path d="M5.500 12.500h5v2h-5z" fill="#fff" stroke="#4a4a4a" strokeWidth=".8" />
      <path d="M4 15.500h8" stroke="#4a4a4a" />
    </Icon>
  );
}

function GridIcon() {
  return (
    <Icon>
      <rect x=".5" y=".5" width="15" height="15" fill="#f4f4f4" stroke="#5a5a5a" />
      <path d="M3.500 0v16M6.500 0v16M9.500 0v16M12.500 0v16M0 3.500h16M0 6.500h16M0 9.500h16M0 12.500h16" stroke="#777b84" />
    </Icon>
  );
}

function ViewportsIcon() {
  return (
    <Icon>
      <rect y="1" width="16" height="14" rx="1" fill="#40699f" />
      {[1, 8.5].map(x => [2, 8.5].map(y => (
        <rect key={`${x}-${y}`} x={x + 0.5} y={y + 0.5} width="5.500" height="4.500" fill="#8fb3e2" stroke="#d3e3f8" />
      )))}
    </Icon>
  );
}

function NavBar() {
  return (
    <div className="flex gap-[7px] text-[#333]">
      <div className="flex h-[30px] items-center gap-[9px] bg-[#c9c9c9] px-[5px]">
        <button aria-label="动态观察" className="flex items-center gap-[7px]"><OrbitIcon /><Caret /></button>
        <button aria-label="观察方向"><LookAtIcon /></button>
        <button aria-label="平移"><HandIcon /></button>
        <button aria-label="缩放"><ZoomIcon /></button>
        <button aria-label="窗口缩放" className="flex items-center gap-[7px]"><ZoomWindowIcon /><Caret /></button>
      </div>
      <div className="flex h-[30px] items-center gap-[11px] bg-[#c9c9c9] px-[5px]">
        <button aria-label="显示设置" className="flex items-center gap-1"><DisplayIcon /><Caret /></button>
        <button aria-label="栅格和捕捉" className="flex items-center gap-1"><GridIcon /><Caret /></button>
        <button aria-label="视口" className="flex items-center gap-1"><ViewportsIcon /><Caret /></button>
      </div>
    </div>
  );
}

function Rate({ up, value }: { up?: boolean; value: string }) {
  return (
    <div className="flex h-5 items-center justify-between">
      <svg viewBox="0 0 8 8" className="size-2" fill="none">
        <path d={up ? 'M4 8V1M.7 4.300 4 1l3.300 3.300' : 'M4 0v7M.7 3.700 4 7l3.300-3.300'} stroke={up ? '#4db4f5' : '#3fae4c'} strokeWidth="1.600" />
      </svg>
      <span className="text-[11px] leading-4 text-white">{value}<span className="text-[#a3a6ad]">K/s</span></span>
    </div>
  );
}

function SpeedWidget() {
  return (
    <aside className="absolute right-[15px] bottom-[7px] flex items-center">
      <div className={clsx(TITLE_FONT, 'h-10 w-[100px] divide-y divide-[#262a32] rounded-l-full bg-[#343943] pr-11 pl-[11px] shadow-md')}>
        <Rate up value="0" />
        <Rate value="4.9" />
      </div>
      <div className="relative -ml-10 size-[60px] rounded-full shadow-md">
        <svg viewBox="0 0 60 60" className="size-[60px]" fill="none">
          <defs>
            <linearGradient id="gaugeR" x1="0" y1="0" x2="0" y2="1">
              <stop offset="0" stopColor="#3fd6d0" />
              <stop offset=".55" stopColor="#5fd08d" />
              <stop offset="1" stopColor="#e5dc3f" />
            </linearGradient>
            <linearGradient id="gaugeL" x1="0" y1="0" x2="0" y2="1">
              <stop offset="0" stopColor="#f0663f" />
              <stop offset="1" stopColor="#e9d740" />
            </linearGradient>
          </defs>
          <circle cx="30" cy="30" r="29" fill="#4b505f" stroke="#30343d" strokeWidth="2" />
          <path d="M30 5a25 25 0 0 1 0 50" stroke="url(#gaugeR)" strokeWidth="1.600" />
          <path d="M30 55A25 25 0 0 1 6 23" stroke="url(#gaugeL)" strokeWidth="1.600" />
        </svg>
        <p className={clsx(TITLE_FONT, 'absolute inset-0 flex items-baseline justify-center pt-[11px] text-[25px] leading-9 font-light text-white')}>
          81<span className="text-[11px] font-normal">%</span>
        </p>
      </div>
      <p className="absolute right-6 bottom-px text-[13px] leading-4 font-bold whitespace-nowrap text-[#15171b]/75">FLUTE top v1</p>
    </aside>
  );
}

export default function App() {
  return (
    <div className={clsx(UI_FONT, 'flex h-screen flex-col overflow-hidden bg-[#ededed]')}>
      <TitleBar />
      <AppBar />
      <TabBar />
      <main className="relative flex min-h-0 flex-1 flex-col justify-between">
        <Model />
        <ViewCube />
        <div className="relative w-max pt-1 pl-[3px]">
          <Ribbon />
          <div className="mt-1">
            <PanelBar title="浏览器" open />
          </div>
          <BrowserTree />
        </div>
        <div className="relative grid grid-cols-[1fr_auto_1fr] items-end pb-0.5">
          <div className="pl-[3px]">
            <PanelBar title="注释" />
          </div>
          <NavBar />
        </div>
        <SpeedWidget />
      </main>
    </div>
  );
}
